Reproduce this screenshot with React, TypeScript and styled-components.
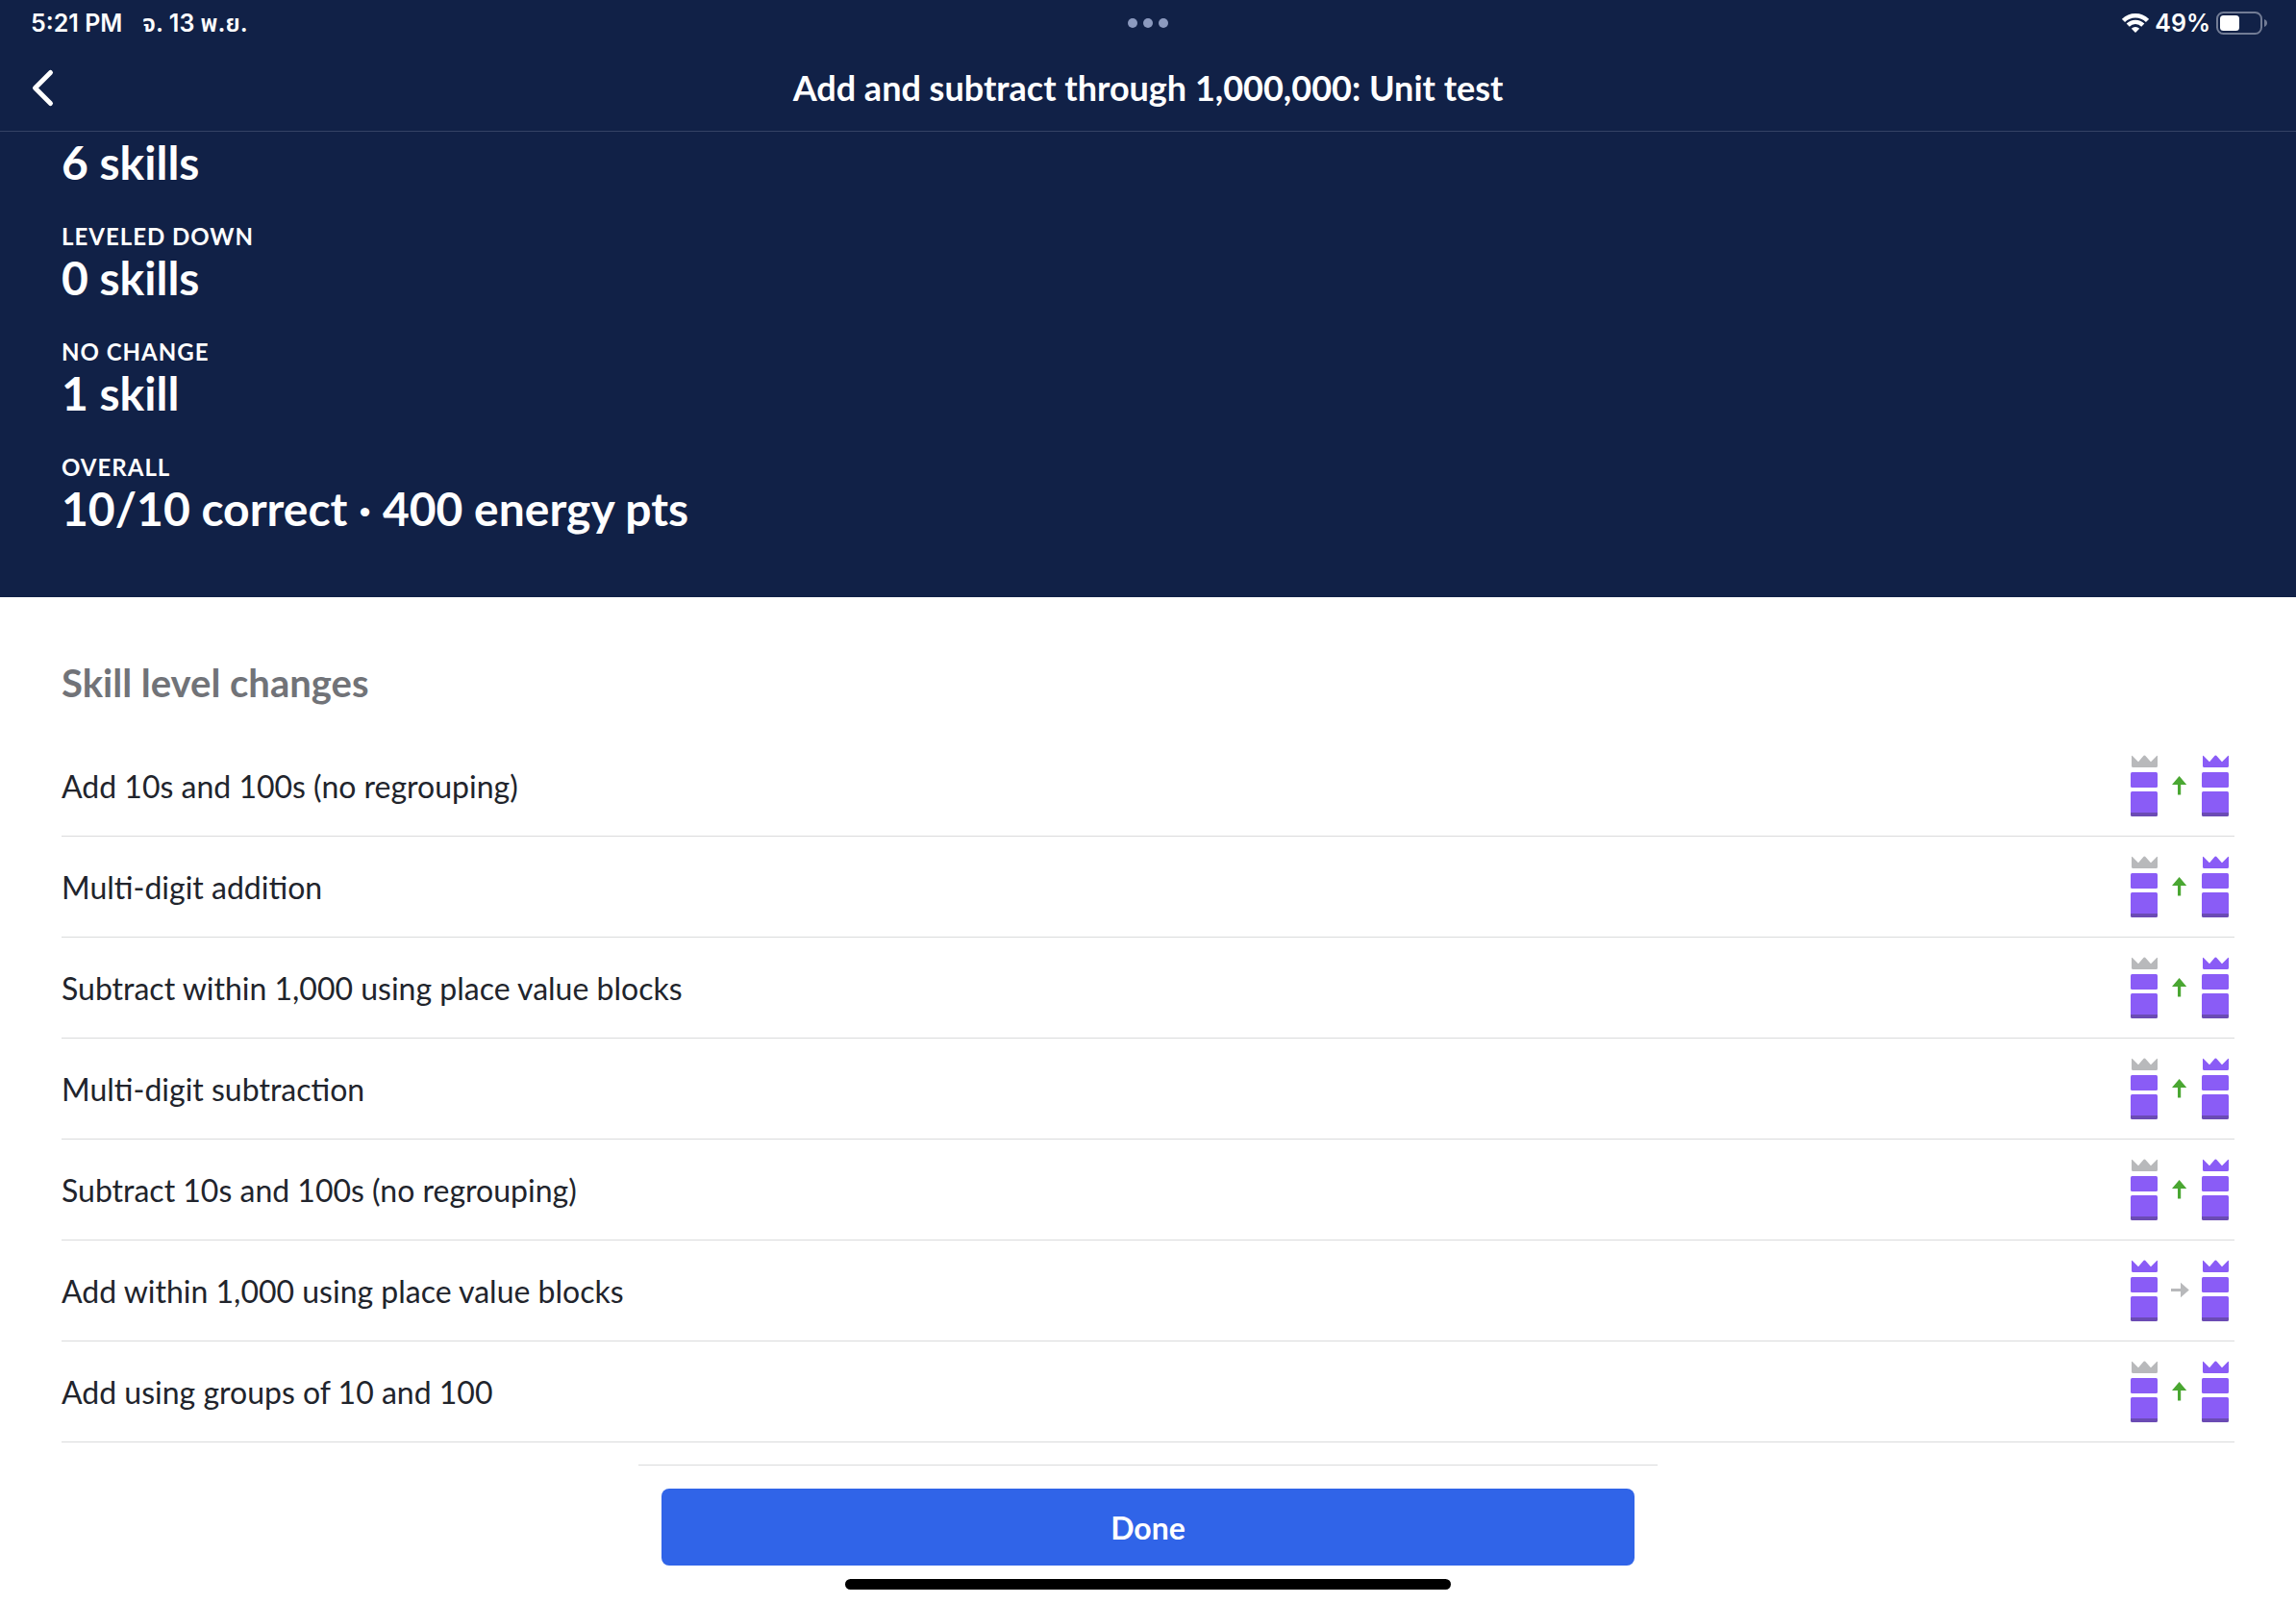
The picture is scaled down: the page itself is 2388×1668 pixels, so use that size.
import React from "react";
import styled, { createGlobalStyle } from "styled-components";

const color = {
  navy: "#112147",
  navyLine: "#344264",
  white: "#ffffff",
  ink: "#21242c",
  muted: "#717378",
  line: "#dadbdc",
  blue: "#3064e8",
  purple: "#8a5cf6",
  purpleDark: "#6b4bb4",
  gray: "#b8b9bb",
  green: "#4aa732",
};

const GlobalStyle = createGlobalStyle`
  *, *::before, *::after { box-sizing: border-box; }
  body {
    margin: 0;
    background: ${color.white};
    color: ${color.ink};
    font-family: Lato, "Noto Sans", sans-serif;
  }
`;

const Page = styled.div`
  min-height: 100vh;
  display: flex;
  flex-direction: column;
`;

const TopBar = styled.header`
  background: ${color.navy};
  color: ${color.white};
  border-bottom: 1px solid ${color.navyLine};
`;

const StatusBar = styled.div`
  display: grid;
  grid-template-columns: 1fr auto 1fr;
  align-items: center;
  height: 48px;
  padding: 0 30px;
  font-family: Inter, "Noto Sans Thai", "Noto Sans", sans-serif;
  font-size: 25px;
  line-height: 30px;
  font-weight: 600;
`;

const Clock = styled.div`
  display: flex;
  gap: 21px;
  padding-left: 2px;
`;

const Indicators = styled.div`
  display: flex;
  align-items: center;
  justify-content: flex-end;
  gap: 6px;
`;

const Dots = styled.div`
  display: flex;
  gap: 6px;
`;

const Dot = styled.span`
  width: 10px;
  height: 10px;
  border-radius: 50%;
  background: #8c9abf;
`;

const NavBar = styled.nav`
  display: grid;
  grid-template-columns: 1fr auto 1fr;
  align-items: center;
  height: 88px;
  padding: 0 24px 2px;
`;

const BackButton = styled.button`
  display: flex;
  width: 48px;
  padding: 0;
  border: 0;
  background: none;
  color: inherit;
  cursor: pointer;
`;

const Title = styled.h1`
  margin: 0;
  font-size: 36px;
  line-height: 44px;
  font-weight: 700;
`;

const Summary = styled.dl`
  display: flex;
  flex-direction: column;
  gap: 34px;
  margin: 0;
  padding: 5px 64px 65px;
  background: ${color.navy};
  color: ${color.white};
`;

const StatLabel = styled.dt`
  font-size: 24px;
  line-height: 32px;
  font-weight: 700;
  letter-spacing: 1px;
  text-transform: uppercase;
`;

const StatValue = styled.dd`
  margin: 0;
  font-size: 48px;
  line-height: 54px;
  font-weight: 700;
`;

const Changes = styled.main`
  flex: 1;
  padding: 64px 64px 23px;
`;

const SectionTitle = styled.h2`
  margin: 0 0 30px;
  font-size: 40px;
  line-height: 50px;
  font-weight: 700;
  color: ${color.muted};
`;

const SkillList = styled.ul`
  margin: 0;
  padding: 0;
  list-style: none;
`;

const SkillRow = styled.li`
  display: flex;
  align-items: center;
  justify-content: space-between;
  padding: 20px 0;
  border-bottom: 1px solid ${color.line};
  font-size: 32px;
  line-height: 40px;
`;

const SkillName = styled.span`
  padding-top: 2px;
`;

const LevelChange = styled.div`
  display: flex;
  flex-shrink: 0;
`;

const Footer = styled.footer`
  position: sticky;
  bottom: 0;
  display: flex;
  flex-direction: column;
  align-items: center;
  padding-bottom: 15px;
  background: ${color.white};
`;

const Actions = styled.div`
  width: 100%;
  max-width: 1060px;
  padding: 24px 24px 14px;
  border-top: 1px solid ${color.line};
`;

const DoneButton = styled.button`
  display: block;
  width: 100%;
  padding: 21px 20px 19px;
  border: 0;
  border-radius: 8px;
  background: ${color.blue};
  color: ${color.white};
  font: inherit;
  font-size: 32px;
  line-height: 40px;
  font-weight: 700;
  cursor: pointer;
`;

const HomeIndicator = styled.div`
  width: 630px;
  max-width: 60%;
  height: 11px;
  border-radius: 6px;
  background: #000;
`;

function WifiIcon() {
  return (
    <svg width="28" height="20" viewBox="0 0 28 20" fill="none" stroke="#fff" strokeWidth="4.4" aria-hidden="true">
      <path d="M1.500 7.400a17.700 17.700 0 0 1 25 0" />
      <path d="M6.200 12.100a11 11 0 0 1 15.600 0" />
      <path d="M14 20l-4.200-4.300a6 6 0 0 1 8.400 0z" fill="#fff" stroke="none" />
    </svg>
  );
}

function BatteryIcon() {
  return (
    <svg width="53" height="24" viewBox="0 0 53 24" aria-hidden="true">
      <rect x="1" y="1" width="46" height="22" rx="6.5" fill="none" stroke="#727c95" strokeWidth="2" />
      <rect x="4" y="4" width="20" height="16" rx="3.5" fill="#fff" />
      <path d="M50 8c2 .8 3 2.200 3 4s-1 3.200-3 4z" fill="#727c95" />
    </svg>
  );
}

function ChevronIcon() {
  return (
    <svg width="36" height="44" viewBox="0 0 36 44" fill="none" stroke="currentColor" strokeWidth="5" strokeLinecap="round" strokeLinejoin="round" aria-hidden="true">
      <path d="M28.500 6.500L12.500 22.500L28.500 38.500" />
    </svg>
  );
}

function LevelIcon({ crowned }: { crowned: boolean }) {
  return (
    <svg width="40" height="64" viewBox="0 0 40 64" role="img" aria-label={crowned ? "Mastered" : "Proficient"}>
      <path
        d="M7 1.200Q7 .2 7.800 1L14 7.300L19.600.8Q20.400 0 21.200.8L27 7.300L33.200 1Q34 .2 34 1.200V11.500Q34 13 32.500 13H8.500Q7 13 7 11.500Z"
        fill={crowned ? color.purple : color.gray}
      />
      <rect x="6" y="18" width="28" height="16" rx="1.500" fill={color.purple} />
      <path d="M7.500 38H32.500Q34 38 34 39.500V60H6V39.500Q6 38 7.500 38Z" fill={color.purple} />
      <path d="M6 60H34V62.500Q34 64 32.500 64H7.500Q6 64 6 62.500Z" fill={color.purpleDark} />
    </svg>
  );
}

function ArrowIcon({ up }: { up: boolean }) {
  return (
    <svg width="34" height="64" viewBox="0 0 34 64" role="img" aria-label={up ? "Leveled up to" : "No change"}>
      {up ? (
        <path d="M16.600 22L24.200 31H18.200V41.500H15V31H9Z" fill={color.green} />
      ) : (
        <path d="M26.800 31.500L18 39.200V33H8V30H18V23.800Z" fill={color.gray} />
      )}
    </svg>
  );
}

const stats = [
  { label: "Leveled down", value: "0 skills" },
  { label: "No change", value: "1 skill" },
  { label: "Overall", value: "10/10 correct · 400 energy pts" },
];

const skills = [
  { name: "Add 10s and 100s (no regrouping)", up: true },
  { name: "Multi-digit addition", up: true },
  { name: "Subtract within 1,000 using place value blocks", up: true },
  { name: "Multi-digit subtraction", up: true },
  { name: "Subtract 10s and 100s (no regrouping)", up: true },
  { name: "Add within 1,000 using place value blocks", up: false },
  { name: "Add using groups of 10 and 100", up: true },
];

export default function App() {
  return (
    <Page>
      <GlobalStyle />
      <TopBar>
        <StatusBar>
          <Clock>
            <span>5:21 PM</span>
            <span lang="th">จ. 13 พ.ย.</span>
          </Clock>
          <Dots>
            <Dot />
            <Dot />
            <Dot />
          </Dots>
          <Indicators>
            <WifiIcon />
            <span>49%</span>
            <BatteryIcon />
          </Indicators>
        </StatusBar>
        <NavBar>
          <BackButton type="button" aria-label="Back">
            <ChevronIcon />
          </BackButton>
          <Title>Add and subtract through 1,000,000: Unit test</Title>
        </NavBar>
      </TopBar>
      <Summary>
        <StatValue>6 skills</StatValue>
        {stats.map((s) => (
          <div key={s.label}>
            <StatLabel>{s.label}</StatLabel>
            <StatValue>{s.value}</StatValue>
          </div>
        ))}
      </Summary>
      <Changes>
        <SectionTitle>Skill level changes</SectionTitle>
        <SkillList>
          {skills.map((s) => (
            <SkillRow key={s.name}>
              <SkillName>{s.name}</SkillName>
              <LevelChange>
                <LevelIcon crowned={!s.up} />
                <ArrowIcon up={s.up} />
                <LevelIcon crowned />
              </LevelChange>
            </SkillRow>
          ))}
        </SkillList>
      </Changes>
      <Footer>
        <Actions>
          <DoneButton type="button">Done</DoneButton>
        </Actions>
        <HomeIndicator />
      </Footer>
    </Page>
  );
}
